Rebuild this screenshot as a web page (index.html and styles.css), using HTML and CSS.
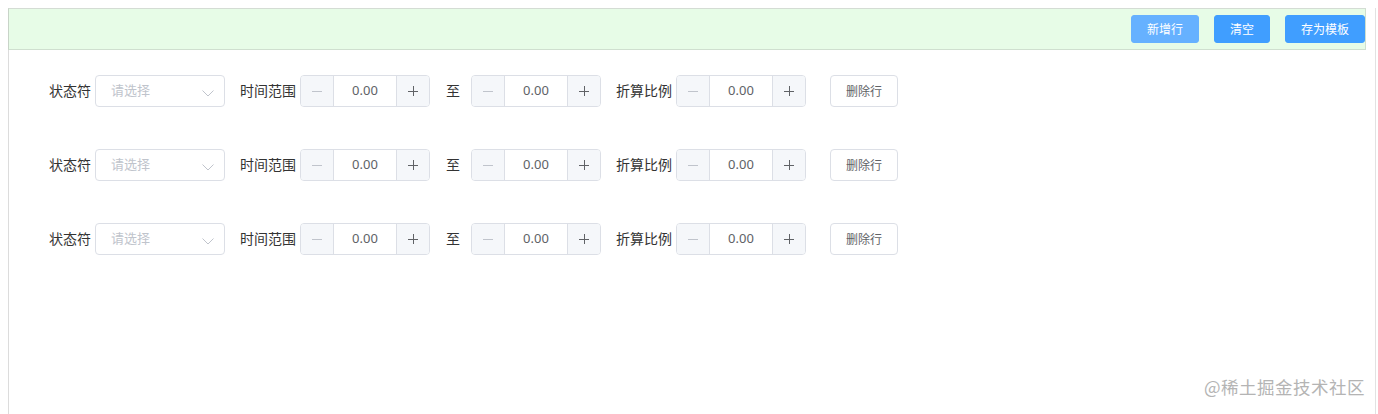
FILE: index.html
```html
<!DOCTYPE html>
<html lang="zh-CN">
<head>
<meta charset="utf-8">
<title>表单</title>
<link rel="stylesheet" href="styles.css">
</head>
<body>
<div class="page">
  <div class="toolbar">
    <button class="btn btn-primary btn-light">新增行</button>
    <button class="btn btn-primary">清空</button>
    <button class="btn btn-primary">存为模板</button>
  </div>
  <div class="rows">
    <div class="row">
      <span class="label">状态符</span>
      <div class="select"><span class="placeholder">请选择</span><svg class="arrow" width="12" height="7" viewBox="0 0 12 7"><path d="M0.5 0.5 L6 6 L11.5 0.5" fill="none" stroke="#c0c4cc" stroke-width="1"/></svg></div>
      <span class="label label-gap">时间范围</span>
      <div class="num"><span class="ctl dec"><svg width="10" height="10" viewBox="0 0 10 10"><path d="M0 5.5 H10" stroke="#c0c4cc" stroke-width="1"/></svg></span><span class="val">0.00</span><span class="ctl inc"><svg width="10" height="10" viewBox="0 0 10 10"><path d="M0 5.5 H10 M5.5 0 V10" stroke="#606266" stroke-width="1"/></svg></span></div>
      <span class="to">至</span>
      <div class="num"><span class="ctl dec"><svg width="10" height="10" viewBox="0 0 10 10"><path d="M0 5.5 H10" stroke="#c0c4cc" stroke-width="1"/></svg></span><span class="val">0.00</span><span class="ctl inc"><svg width="10" height="10" viewBox="0 0 10 10"><path d="M0 5.5 H10 M5.5 0 V10" stroke="#606266" stroke-width="1"/></svg></span></div>
      <span class="label label-gap">折算比例</span>
      <div class="num"><span class="ctl dec"><svg width="10" height="10" viewBox="0 0 10 10"><path d="M0 5.5 H10" stroke="#c0c4cc" stroke-width="1"/></svg></span><span class="val">0.00</span><span class="ctl inc"><svg width="10" height="10" viewBox="0 0 10 10"><path d="M0 5.5 H10 M5.5 0 V10" stroke="#606266" stroke-width="1"/></svg></span></div>
      <button class="btn btn-default del">删除行</button>
    </div>
    <div class="row">
      <span class="label">状态符</span>
      <div class="select"><span class="placeholder">请选择</span><svg class="arrow" width="12" height="7" viewBox="0 0 12 7"><path d="M0.5 0.5 L6 6 L11.5 0.5" fill="none" stroke="#c0c4cc" stroke-width="1"/></svg></div>
      <span class="label label-gap">时间范围</span>
      <div class="num"><span class="ctl dec"><svg width="10" height="10" viewBox="0 0 10 10"><path d="M0 5.5 H10" stroke="#c0c4cc" stroke-width="1"/></svg></span><span class="val">0.00</span><span class="ctl inc"><svg width="10" height="10" viewBox="0 0 10 10"><path d="M0 5.5 H10 M5.5 0 V10" stroke="#606266" stroke-width="1"/></svg></span></div>
      <span class="to">至</span>
      <div class="num"><span class="ctl dec"><svg width="10" height="10" viewBox="0 0 10 10"><path d="M0 5.5 H10" stroke="#c0c4cc" stroke-width="1"/></svg></span><span class="val">0.00</span><span class="ctl inc"><svg width="10" height="10" viewBox="0 0 10 10"><path d="M0 5.5 H10 M5.5 0 V10" stroke="#606266" stroke-width="1"/></svg></span></div>
      <span class="label label-gap">折算比例</span>
      <div class="num"><span class="ctl dec"><svg width="10" height="10" viewBox="0 0 10 10"><path d="M0 5.5 H10" stroke="#c0c4cc" stroke-width="1"/></svg></span><span class="val">0.00</span><span class="ctl inc"><svg width="10" height="10" viewBox="0 0 10 10"><path d="M0 5.5 H10 M5.5 0 V10" stroke="#606266" stroke-width="1"/></svg></span></div>
      <button class="btn btn-default del">删除行</button>
    </div>
    <div class="row">
      <span class="label">状态符</span>
      <div class="select"><span class="placeholder">请选择</span><svg class="arrow" width="12" height="7" viewBox="0 0 12 7"><path d="M0.5 0.5 L6 6 L11.5 0.5" fill="none" stroke="#c0c4cc" stroke-width="1"/></svg></div>
      <span class="label label-gap">时间范围</span>
      <div class="num"><span class="ctl dec"><svg width="10" height="10" viewBox="0 0 10 10"><path d="M0 5.5 H10" stroke="#c0c4cc" stroke-width="1"/></svg></span><span class="val">0.00</span><span class="ctl inc"><svg width="10" height="10" viewBox="0 0 10 10"><path d="M0 5.5 H10 M5.5 0 V10" stroke="#606266" stroke-width="1"/></svg></span></div>
      <span class="to">至</span>
      <div class="num"><span class="ctl dec"><svg width="10" height="10" viewBox="0 0 10 10"><path d="M0 5.5 H10" stroke="#c0c4cc" stroke-width="1"/></svg></span><span class="val">0.00</span><span class="ctl inc"><svg width="10" height="10" viewBox="0 0 10 10"><path d="M0 5.5 H10 M5.5 0 V10" stroke="#606266" stroke-width="1"/></svg></span></div>
      <span class="label label-gap">折算比例</span>
      <div class="num"><span class="ctl dec"><svg width="10" height="10" viewBox="0 0 10 10"><path d="M0 5.5 H10" stroke="#c0c4cc" stroke-width="1"/></svg></span><span class="val">0.00</span><span class="ctl inc"><svg width="10" height="10" viewBox="0 0 10 10"><path d="M0 5.5 H10 M5.5 0 V10" stroke="#606266" stroke-width="1"/></svg></span></div>
      <button class="btn btn-default del">删除行</button>
    </div>
  </div>
  <div class="watermark">@稀土掘金技术社区</div>
</div>
</body>
</html>
```

FILE: styles.css
```css
html, body {
  margin: 0;
  padding: 0;
  background: #ffffff;
}
body {
  padding: 8px 0 0 8px;
  font-family: "Noto Sans CJK SC", "Noto Sans", sans-serif;
  color: #333333;
  height: 414px;
  box-sizing: border-box;
  overflow: hidden;
}
.page {
  position: relative;
  width: 1368px;
  height: 406px;
  box-sizing: border-box;
  border-left: 1px solid #dcdcdc;
  border-right: 1px solid #e2e2e2;
}
.toolbar {
  box-sizing: border-box;
  width: 1358px;
  height: 42px;
  background: #e7fce7;
  border: 1px solid #cfdfcf;
  border-left-color: #c8d4c8;
  border-top-color: #d4dcd4;
  display: flex;
  align-items: center;
  justify-content: flex-end;
  gap: 15px;
  margin-left: -1px;
}
.btn {
  font-family: "Noto Sans CJK SC", "Noto Sans", sans-serif;
  font-size: 12px;
  line-height: 12px;
  border-radius: 3px;
  box-sizing: border-box;
  cursor: pointer;
  margin: 0;
}
.btn-primary {
  height: 28px;
  padding: 0 15px;
  background: #409eff;
  border: 1px solid #409eff;
  color: #ffffff;
}
.btn-light {
  background: #66b1ff;
  border-color: #66b1ff;
}
.btn-default {
  height: 32px;
  padding: 0 15px;
  background: #ffffff;
  border: 1px solid #dcdfe6;
  color: #606266;
  border-radius: 4px;
}
.rows {
  display: flex;
  flex-direction: column;
  gap: 42px;
  padding: 25px 0 0 40px;
}
.row {
  display: flex;
  align-items: center;
  height: 32px;
}
.label {
  font-size: 14px;
  line-height: 18px;
  color: #333333;
  margin-right: 4px;
  margin-top: -2px;
  white-space: nowrap;
}
.label-gap {
  margin-left: 15px;
}
.select {
  width: 130px;
  height: 32px;
  box-sizing: border-box;
  border: 1px solid #dcdfe6;
  border-radius: 4px;
  display: flex;
  align-items: center;
  justify-content: space-between;
  padding: 0 10px 0 15px;
}
.placeholder {
  font-size: 13px;
  line-height: 16px;
  margin-top: -2px;
  color: #c0c4cc;
}
.arrow {
  margin-top: 4px;
}
.num {
  width: 130px;
  height: 32px;
  box-sizing: border-box;
  border: 1px solid #dcdfe6;
  border-radius: 4px;
  display: flex;
  overflow: hidden;
}
.ctl {
  width: 32px;
  background: #f5f7fa;
  display: flex;
  align-items: center;
  justify-content: center;
}
.dec {
  border-right: 1px solid #dcdfe6;
}
.inc {
  border-left: 1px solid #dcdfe6;
}
.val {
  flex: 1;
  display: flex;
  align-items: center;
  justify-content: center;
  font-family: "Noto Sans", "Liberation Sans", sans-serif;
  font-size: 13px;
  color: #606266;
  padding-bottom: 2px;
}
.to {
  font-size: 14px;
  line-height: 18px;
  margin-top: -2px;
  color: #333333;
  margin-left: 16px;
  margin-right: 11px;
}
.del {
  margin-left: 24px;
}
.watermark {
  position: absolute;
  right: 10px;
  bottom: 15px;
  font-size: 17.5px;
  color: #b4b4b4;
  letter-spacing: 0.5px;
}
```
